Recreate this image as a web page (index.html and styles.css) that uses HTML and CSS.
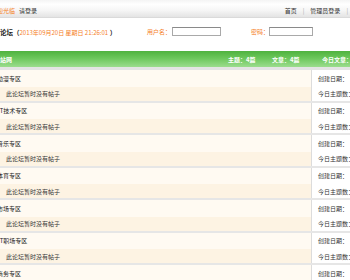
FILE: index.html
```html
<!DOCTYPE html>
<html lang="zh-CN">
<head>
    <meta charset="UTF-8">
    <title>论坛首页</title>
    <link rel="stylesheet" href="styles.css">
</head>
<body>
    <div id="top-bar">
        <div class="welcome">
            <span class="hi">欢迎光临</span>
            <a href="#">请登录</a>
        </div>
        <ul class="nav">
            <li><a href="#">首页</a></li>
            <li class="sep">|</li>
            <li><a href="#">管理员登录</a></li>
            <li class="sep">|</li>
        </ul>
    </div>

    <div id="title-row">
        <div class="title">论坛（<span class="date">2013年09月20日 星期日 21:26:01</span> ）</div>
        <label class="lbl user">用户名：</label>
        <input class="ipt ipt-user" type="text">
        <label class="lbl pwd">密码：</label>
        <input class="ipt ipt-pwd" type="password">
    </div>

    <div id="green-bar">
        <div class="site">站网</div>
        <div class="stat s1">主题：4篇</div>
        <div class="stat s2">文章：4篇</div>
        <div class="stat s3">今日文章：0篇</div>
    </div>

    <div id="board-list">
        <div class="board">
            <div class="name"><span class="cut">动漫专区</span></div>
            <div class="info">
                <p>创建日期：</p>
                <p>今日主题数：0</p>
            </div>
            <div class="post">此论坛暂时没有帖子</div>
        </div>
        <div class="board">
            <div class="name"><span class="cut-i">IT技术专区</span></div>
            <div class="info">
                <p>创建日期：</p>
                <p>今日主题数：0</p>
            </div>
            <div class="post">此论坛暂时没有帖子</div>
        </div>
        <div class="board">
            <div class="name"><span class="cut">音乐专区</span></div>
            <div class="info">
                <p>创建日期：</p>
                <p>今日主题数：0</p>
            </div>
            <div class="post">此论坛暂时没有帖子</div>
        </div>
        <div class="board">
            <div class="name"><span class="cut">体育专区</span></div>
            <div class="info">
                <p>创建日期：</p>
                <p>今日主题数：0</p>
            </div>
            <div class="post">此论坛暂时没有帖子</div>
        </div>
        <div class="board">
            <div class="name"><span class="cut">市场专区</span></div>
            <div class="info">
                <p>创建日期：</p>
                <p>今日主题数：0</p>
            </div>
            <div class="post">此论坛暂时没有帖子</div>
        </div>
        <div class="board">
            <div class="name"><span class="cut-i">IT职场专区</span></div>
            <div class="info">
                <p>创建日期：</p>
                <p>今日主题数：0</p>
            </div>
            <div class="post">此论坛暂时没有帖子</div>
        </div>
        <div class="board">
            <div class="name"><span class="cut">商务专区</span></div>
            <div class="info">
                <p>创建日期：</p>
                <p>今日主题数：0</p>
            </div>
            <div class="post">此论坛暂时没有帖子</div>
        </div>
    </div>
</body>
</html>
```

FILE: styles.css
```css
*{
    margin: 0;
    padding: 0;
}
ul{
    list-style: none;
}
a{
    color: #333;
    text-decoration: none;
}
body{
    width: 350px;
    overflow: hidden;
    background: #fff;
    font-family: "Noto Sans CJK SC", "Noto Sans", sans-serif;
    font-size: 6px;
    color: #333;
    white-space: nowrap;
}
/* 顶部条 */
#top-bar{
    display: flex;
    justify-content: space-between;
    align-items: center;
    height: 14px;
    padding-top: 3px;
    background: linear-gradient(#f4f4f4, #fff 25%, #f6f6f6 60%, #e4e4e4);
    border-bottom: 1px solid #dadada;
}
#top-bar .welcome{
    display: flex;
    gap: 4px;
}
#top-bar .hi{
    color: #f5801f;
    margin-left: -9px;
}
#top-bar .nav{
    display: flex;
    gap: 6px;
    margin-right: 2px;
}
#top-bar .sep{
    color: #aaa;
}
/* 标题和登录 */
#title-row{
    display: flex;
    align-items: center;
    height: 27px;
}
#title-row .title{
    width: 147px;
    font-size: 6.5px;
    font-weight: bold;
    color: #222;
}
#title-row .date{
    font-size: 6px;
    font-weight: normal;
    color: #f5801f;
}
#title-row .lbl{
    color: #f5801f;
}
#title-row .ipt{
    height: 7px;
    border: 1px solid #a9a9a9;
    border-top-color: #8a8a8a;
    background: #fff;
    outline: none;
}
#title-row .ipt-user{
    width: 47px;
    margin-left: 1px;
}
#title-row .pwd{
    margin-left: 30px;
}
#title-row .ipt-pwd{
    width: 42px;
}
/* 绿色栏 */
#green-bar{
    display: flex;
    align-items: center;
    height: 16px;
    margin-top: 6px;
    background: linear-gradient(#4fb23e, #6cc75b 45%, #8ad57b 80%, #9bdc8e);
    color: #fff;
    font-weight: bold;
    border-bottom: 3px solid #e4e4e4;
}
#green-bar .site{
    width: 228px;
    flex: none;
}
#green-bar .stat{
    flex: none;
}
#green-bar .s1{
    width: 44px;
}
#green-bar .s2{
    width: 50px;
}
/* 版块列表 */
.board{
    display: grid;
    grid-template-columns: 311px 1fr;
    grid-template-rows: 16.5px 14px;
    border-bottom: 2px solid #e6e6e6;
}
.board .name{
    display: flex;
    align-items: center;
    background: #fffaf2;
    color: #222;
}
.board .cut{
    margin-left: -3px;
}
.board .cut-i{
    margin-left: -2px;
}
.board .post{
    display: flex;
    align-items: center;
    padding-left: 6px;
    background: #fdf3e3;
    color: #333;
}
.board .info{
    grid-column: 2;
    grid-row: 1 / 3;
    display: grid;
    grid-template-rows: 16.5px 14px;
    padding-left: 6px;
    background: #fff;
    border-left: 1px solid #dcdcdc;
    overflow: hidden;
}
.board .info p{
    display: flex;
    align-items: center;
}
```
